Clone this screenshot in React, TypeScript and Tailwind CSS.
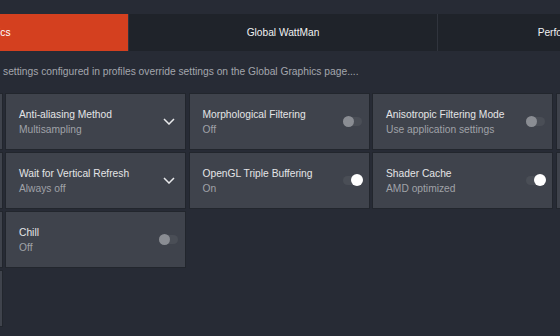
const font = "font-['Liberation_Sans',Arial,sans-serif]";

type Setting = {
  title: string;
  value: string;
  kind: "select" | "off" | "on" | "none";
};

const columns: Setting[][] = [
  [
    { title: "", value: "", kind: "none" },
    { title: "", value: "", kind: "none" },
    { title: "", value: "", kind: "none" },
    { title: "", value: "", kind: "none" },
  ],
  [
    { title: "Anti-aliasing Method", value: "Multisampling", kind: "select" },
    { title: "Wait for Vertical Refresh", value: "Always off", kind: "select" },
    { title: "Chill", value: "Off", kind: "off" },
  ],
  [
    { title: "Morphological Filtering", value: "Off", kind: "off" },
    { title: "OpenGL Triple Buffering", value: "On", kind: "on" },
  ],
  [
    { title: "Anisotropic Filtering Mode", value: "Use application settings", kind: "off" },
    { title: "Shader Cache", value: "AMD optimized", kind: "on" },
  ],
  [
    { title: "", value: "", kind: "none" },
    { title: "", value: "", kind: "none" },
  ],
];

function Chevron() {
  return (
    <svg width="12" height="7" viewBox="0 0 12 7" className="shrink-0">
      <polyline points="1,1 6,6 11,1" fill="none" stroke="#e8e9eb" strokeWidth="1.5" />
    </svg>
  );
}

function Toggle({ on }: { on: boolean }) {
  return (
    <div className="relative w-[19px] h-[9px] rounded-full bg-[#4a4e56] shrink-0">
      {on ? (
        <span className="absolute right-[-1px] top-[-2px] w-[12px] h-[12px] rounded-full bg-white" />
      ) : (
        <span className="absolute left-0 top-[-1px] w-[11px] h-[11px] rounded-full bg-[#8a8d93]" />
      )}
    </div>
  );
}

function Card({ s }: { s: Setting }) {
  return (
    <div className="h-[57px] bg-[#3f434c] border border-[#22262d] flex items-center pl-[13px] pr-[7px]">
      <div className="flex-1 flex flex-col gap-[3px] mt-[2px]">
        <div className="text-[10.25px] leading-[12px] text-[#e4e5e7]">{s.title}</div>
        <div className="text-[10.25px] leading-[12px] text-[#9fa2a8]">{s.value}</div>
      </div>
      {s.kind === "select" && <div className="mr-[3px]"><Chevron /></div>}
      {s.kind === "off" && <Toggle on={false} />}
      {s.kind === "on" && <Toggle on={true} />}
    </div>
  );
}

export default function App() {
  return (
    <div className={`w-[560px] h-[336px] overflow-hidden bg-[#272b35] ${font}`}>
      <div className="h-[14px]" />
      <div className="flex gap-px -ml-[180px] h-[37px] bg-[#30343d]">
        <div className="w-[308px] shrink-0 bg-[#d4401f] flex items-center justify-center text-[10.2px] text-white">
          Global Graphics
        </div>
        <div className="w-[308px] shrink-0 bg-[#1f232a] flex items-center justify-center text-[10.2px] text-[#f0f1f2]">
          Global WattMan
        </div>
        <div className="w-[308px] shrink-0 bg-[#1f232a] flex items-center justify-center text-[10.2px] text-[#f0f1f2]">
          Performance Monitoring
        </div>
      </div>
      <div className="h-[42px] flex items-center pl-[3px] text-[10.25px] text-[#a3a6ad]">
        settings configured in profiles override settings on the Global Graphics page....
      </div>
      <div className="flex items-start gap-[2.5px] -ml-[178.5px]">
        {columns.map((col, i) => (
          <div key={i} className="w-[181px] shrink-0 flex flex-col gap-[2px]">
            {col.map((s, j) => (
              <Card key={j} s={s} />
            ))}
          </div>
        ))}
      </div>
    </div>
  );
}
